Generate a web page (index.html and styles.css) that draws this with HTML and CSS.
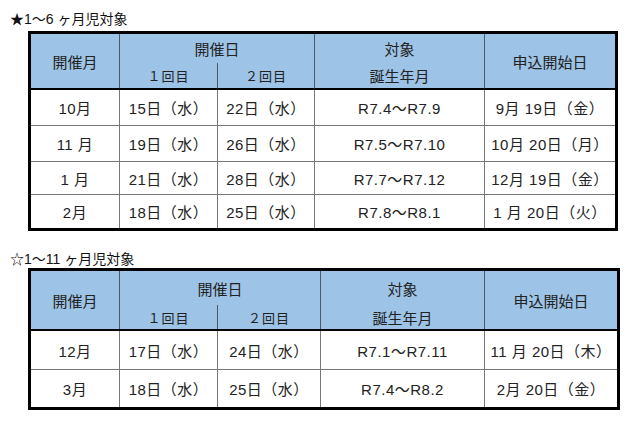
FILE: index.html
```html
<!DOCTYPE html>
<html lang="ja">
<head>
<meta charset="utf-8">
<link rel="stylesheet" href="styles.css">
</head>
<body>
<p class="title first">★1～6 ヶ月児対象</p>
<table class="sched t1">
  <colgroup><col class="c1"><col class="c2"><col class="c3"><col class="c4"><col class="c5"></colgroup>
  <thead>
    <tr class="h1">
      <th rowspan="2">開催月</th>
      <th colspan="2" class="nob">開催日</th>
      <th class="nob">対象</th>
      <th rowspan="2">申込開始日</th>
    </tr>
    <tr class="h2">
      <th class="not sub">１回目</th>
      <th class="not sub">２回目</th>
      <th class="not">誕生年月</th>
    </tr>
  </thead>
  <tbody>
    <tr class="r1"><td>10月</td><td>15日（水）</td><td>22日（水）</td><td>R7.4～R7.9</td><td>9月 19日（金）</td></tr>
    <tr class="r2"><td>11 月</td><td>19日（水）</td><td>26日（水）</td><td>R7.5～R7.10</td><td>10月 20日（月）</td></tr>
    <tr class="r3"><td>1 月</td><td>21日（水）</td><td>28日（水）</td><td>R7.7～R7.12</td><td>12月 19日（金）</td></tr>
    <tr class="r4"><td>2月</td><td>18日（水）</td><td>25日（水）</td><td>R7.8～R8.1</td><td>1 月 20日（火）</td></tr>
  </tbody>
</table>
<p class="title second">☆1～11 ヶ月児対象</p>
<table class="sched t2">
  <colgroup><col class="c1"><col class="c2"><col class="c3"><col class="c4"><col class="c5"></colgroup>
  <thead>
    <tr class="h1">
      <th rowspan="2">開催月</th>
      <th colspan="2" class="nob">開催日</th>
      <th class="nob">対象</th>
      <th rowspan="2">申込開始日</th>
    </tr>
    <tr class="h2">
      <th class="not sub">１回目</th>
      <th class="not sub">２回目</th>
      <th class="not">誕生年月</th>
    </tr>
  </thead>
  <tbody>
    <tr class="r1"><td>12月</td><td>17日（水）</td><td>24日（水）</td><td>R7.1～R7.11</td><td>11 月 20日（木）</td></tr>
    <tr class="r2"><td>3月</td><td>18日（水）</td><td>25日（水）</td><td>R7.4～R8.2</td><td>2月 20日（金）</td></tr>
  </tbody>
</table>
</body>
</html>
```

FILE: styles.css
```css
html, body {
  margin: 0;
  padding: 0;
  background: #fff;
}
body {
  font-family: "Liberation Sans", "Noto Sans CJK JP", sans-serif;
  color: #222;
  text-spacing-trim: space-all;
}
.title {
  margin: 0;
  padding-left: 10px;
  font-size: 14px;
  line-height: 16px;
  height: 16px;
  color: #111;
}
.title.first {
  padding-top: 11px;
  padding-bottom: 4px;
}
.title.second {
  padding-top: 20px;
  padding-bottom: 1px;
}
.sched {
  margin-left: 28px;
  border-collapse: collapse;
  table-layout: fixed;
  border: 3px solid #000;
  font-size: 15px;
  letter-spacing: 0.5px;
}
.sched th,
.sched td {
  border: 1px solid #777;
  padding: 0;
  text-align: center;
  vertical-align: middle;
  font-weight: normal;
  white-space: nowrap;
}
.sched th {
  background: #9dc3e6;
  color: #222;
  font-size: 15px;
  letter-spacing: 0;
  border-color: #4a5a6a;
}
.sched th.sub {
  font-size: 13px;
  letter-spacing: 1px;
}
.sched th.nob {
  border-bottom: 0;
}
.sched th.not {
  border-top: 0;
}
.sched .h2 th {
  border-bottom: 2px solid #000;
}
.sched .h1 th[rowspan] {
  border-bottom: 2px solid #000;
}
.t1 { width: 590px; }
.t1 .c1 { width: 90px; }
.t1 .c2 { width: 98px; }
.t1 .c3 { width: 97px; }
.t1 .c4 { width: 170px; }
.t1 .c5 { width: 132px; }
.t1 .h1 th { height: 29px; }
.t1 .h2 th { height: 25px; }
.t1 .r1 td { height: 35px; }
.t1 .r2 td { height: 35px; }
.t1 .r3 td { height: 32px; }
.t1 .r4 td { height: 33px; }

.t2 { width: 592px; }
.t2 .c1 { width: 90px; }
.t2 .c2 { width: 98px; }
.t2 .c3 { width: 103px; }
.t2 .c4 { width: 164px; }
.t2 .c5 { width: 134px; }
.t2 .h1 th { height: 34px; }
.t2 .h2 th { height: 24px; }
.t2 .r1 td { height: 38px; }
.t2 .r2 td { height: 37px; }
```
